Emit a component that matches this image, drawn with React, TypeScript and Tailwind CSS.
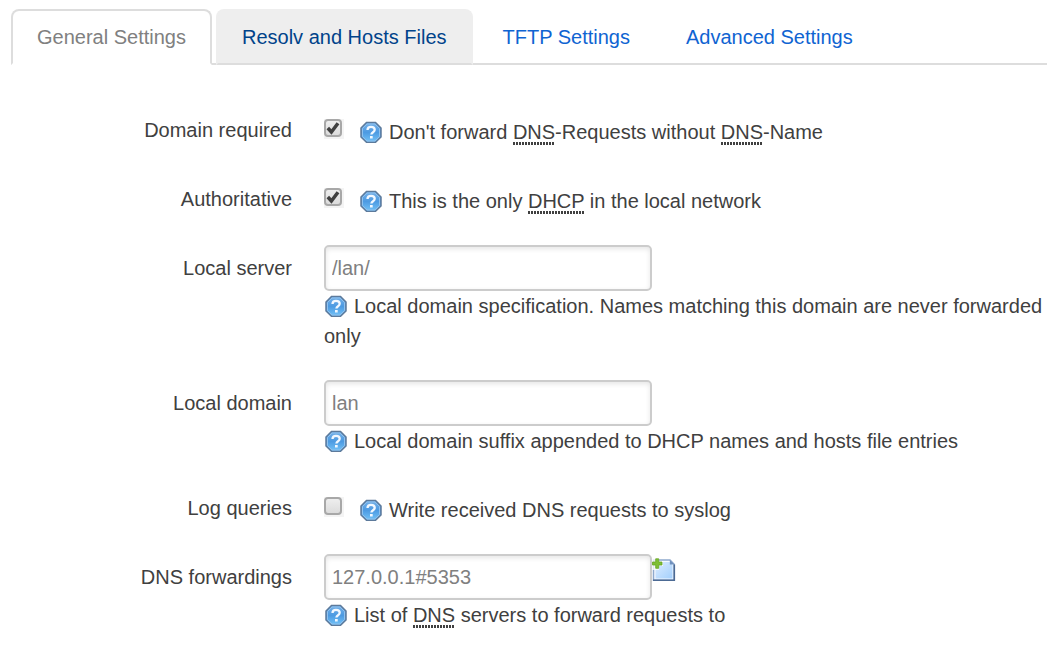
import React from "react";

function HelpIcon() {
  return (
    <svg className="inline-block h-[22px] w-[22px] shrink-0" viewBox="0 0 22 22" aria-hidden="true">
      <defs>
        <linearGradient id="help-fill" x1="0" y1="0" x2="0" y2="1">
          <stop offset="0" stopColor="#78b2e8" />
          <stop offset="0.5" stopColor="#4c9ae2" />
          <stop offset="1" stopColor="#74c4f8" />
        </linearGradient>
      </defs>
      <path d="M6.500 1.500h9L21 7v9L15.500 21.300h-9L1 16V7z" fill="url(#help-fill)" stroke="#5d7a9b" strokeWidth="1.500" />
      <path d="M7 3h8L19.500 7.500v8L15 20H7L2.500 15.500v-8z" fill="none" stroke="#8fc1ee" strokeWidth="1" />
      <path d="M7.500 9C7.500 6.700 9 5.800 11 5.800s3.700 1.100 3.700 3c0 2.500-3.300 2.300-3.300 4.800" fill="none" stroke="#f2f8ff" strokeWidth="2.300" />
      <rect x="10" y="15" width="2.700" height="2.500" fill="#f2f8ff" />
    </svg>
  );
}

function AddIcon() {
  return (
    <svg className="h-6 w-6" viewBox="0 0 24 24" aria-hidden="true">
      <defs>
        <linearGradient id="page-fill" x1="0" y1="0" x2="1" y2="1">
          <stop offset="0" stopColor="#dcecff" />
          <stop offset="1" stopColor="#a3cffc" />
        </linearGradient>
      </defs>
      <path d="M1.500 2H18l4.200 4.200V22.200H1.500z" fill="#f4f9ff" stroke="#8ea9cd" strokeWidth="1.500" />
      <path d="M3.500 4H17.500l3 3v13.500h-17z" fill="url(#page-fill)" />
      <path d="M1 22.300h21.300V6.500" fill="none" stroke="#4c6a94" strokeWidth="1.600" />
      <path d="M17.800 2l4.600 4.600h-4.600z" fill="#6f90bd" />
      <path d="M0 0h7v3h4v5H7v4H0z" fill="#fff" opacity="0.75" />
      <path d="M3.700 0.800h3v3.200h3.300v3H6.700v3.300h-3V7H0.500V4h3.200z" fill="#7fbf35" stroke="#68a525" strokeWidth="0.800" />
    </svg>
  );
}

function Abbr({ children, title }: { children: string; title: string }) {
  return (
    <abbr
      title={title}
      className="bg-[repeating-linear-gradient(90deg,#404040_0_2px,transparent_2px_3px)] bg-[length:100%_3px] bg-bottom bg-no-repeat pb-[2px] no-underline"
    >
      {children}
    </abbr>
  );
}

const tabs = [
  { name: "General Settings", style: "border-[#ddd] border-b-white bg-white text-[#808080]" },
  { name: "Resolv and Hosts Files", style: "border-[#eee] border-b-[#ddd] bg-[#eee] text-[#00438a]" },
  { name: "TFTP Settings", style: "border-transparent text-[#0f64d2]" },
  { name: "Advanced Settings", style: "border-transparent text-[#0f64d2]" },
];

function Row({ id, label, children }: { id: string; label: string; children: React.ReactNode }) {
  return (
    <div className="flex gap-8">
      <label htmlFor={id} className="w-[292px] shrink-0 pt-2 text-right">
        {label}
      </label>
      <div className="shrink-0">{children}</div>
    </div>
  );
}

function CheckRow({ id, label, checked, children }: { id: string; label: string; checked?: boolean; children: React.ReactNode }) {
  return (
    <Row id={id} label={label}>
      <div className="flex items-start">
        <span className="mt-3 mr-4 grid h-5 w-5 bg-[#f4f4f4]">
          <input
            id={id}
            type="checkbox"
            defaultChecked={checked}
            className="peer col-start-1 row-start-1 h-[18px] w-[18px] appearance-none rounded-[4px] border-2 border-[#a8a8a8] bg-linear-to-b from-[#eee] to-[#dcdcdc]"
          />
          <svg className="pointer-events-none col-start-1 row-start-1 hidden h-[18px] w-[18px] peer-checked:block" viewBox="0 0 18 18" aria-hidden="true">
            <path d="M3.800 9l3.600 4L14 4.200" fill="none" stroke="#404040" strokeWidth="3.500" />
          </svg>
        </span>
        <p className="flex items-center gap-[7px] pt-[10px]">
          <HelpIcon />
          <span>{children}</span>
        </p>
      </div>
    </Row>
  );
}

function TextRow({ id, label, value, action, children }: { id: string; label: string; value: string; action?: React.ReactNode; children: React.ReactNode }) {
  return (
    <Row id={id} label={label}>
      <div className="flex items-start">
        <input
          id={id}
          type="text"
          defaultValue={value}
          className="h-[46px] w-[328px] rounded-[5px] border-2 border-[#ccc] bg-white px-[6px] text-[#808080] shadow-[inset_0_2px_5px_rgba(0,0,0,0.1)] outline-none"
        />
        {action}
      </div>
      <div>{children}</div>
    </Row>
  );
}

function Hint({ children }: { children: React.ReactNode }) {
  return (
    <p className="flex items-center gap-[7px] pl-px whitespace-nowrap">
      <HelpIcon />
      <span>{children}</span>
    </p>
  );
}

export default function App() {
  return (
    <main className="min-h-screen overflow-x-hidden bg-white pt-[9px] font-['Liberation_Sans',Arial,sans-serif] text-[20px] leading-[30px] text-[#404040]">
      <nav className="ml-[11px] flex gap-1 border-b-2 border-[#ddd]">
        {tabs.map((tab) => (
          <a key={tab.name} href="#" className={`-mb-[2px] shrink-0 rounded-t-[8px] border-2 px-6 py-[11px] ${tab.style}`}>
            {tab.name}
          </a>
        ))}
      </nav>
      <form className="flex flex-col gap-[29px] pt-[42px]">
        <CheckRow id="domain-required" label="Domain required" checked>
          Don't forward <Abbr title="Domain Name System">DNS</Abbr>-Requests without <Abbr title="Domain Name System">DNS</Abbr>-Name
        </CheckRow>
        <CheckRow id="authoritative" label="Authoritative" checked>
          This is the only <Abbr title="Dynamic Host Configuration Protocol">DHCP</Abbr> in the local network
        </CheckRow>
        <TextRow id="local-server" label="Local server" value="/lan/">
          <Hint>Local domain specification. Names matching this domain are never forwarded</Hint>
          <p>only</p>
        </TextRow>
        <TextRow id="local-domain" label="Local domain" value="lan">
          <Hint>Local domain suffix appended to DHCP names and hosts file entries</Hint>
        </TextRow>
        <CheckRow id="log-queries" label="Log queries">
          Write received DNS requests to syslog
        </CheckRow>
        <TextRow
          id="dns-forwardings"
          label="DNS forwardings"
          value="127.0.0.1#5353"
          action={
            <button type="button" aria-label="Add" className="mt-1">
              <AddIcon />
            </button>
          }
        >
          <Hint>
            List of <Abbr title="Domain Name System">DNS</Abbr> servers to forward requests to
          </Hint>
        </TextRow>
      </form>
    </main>
  );
}
